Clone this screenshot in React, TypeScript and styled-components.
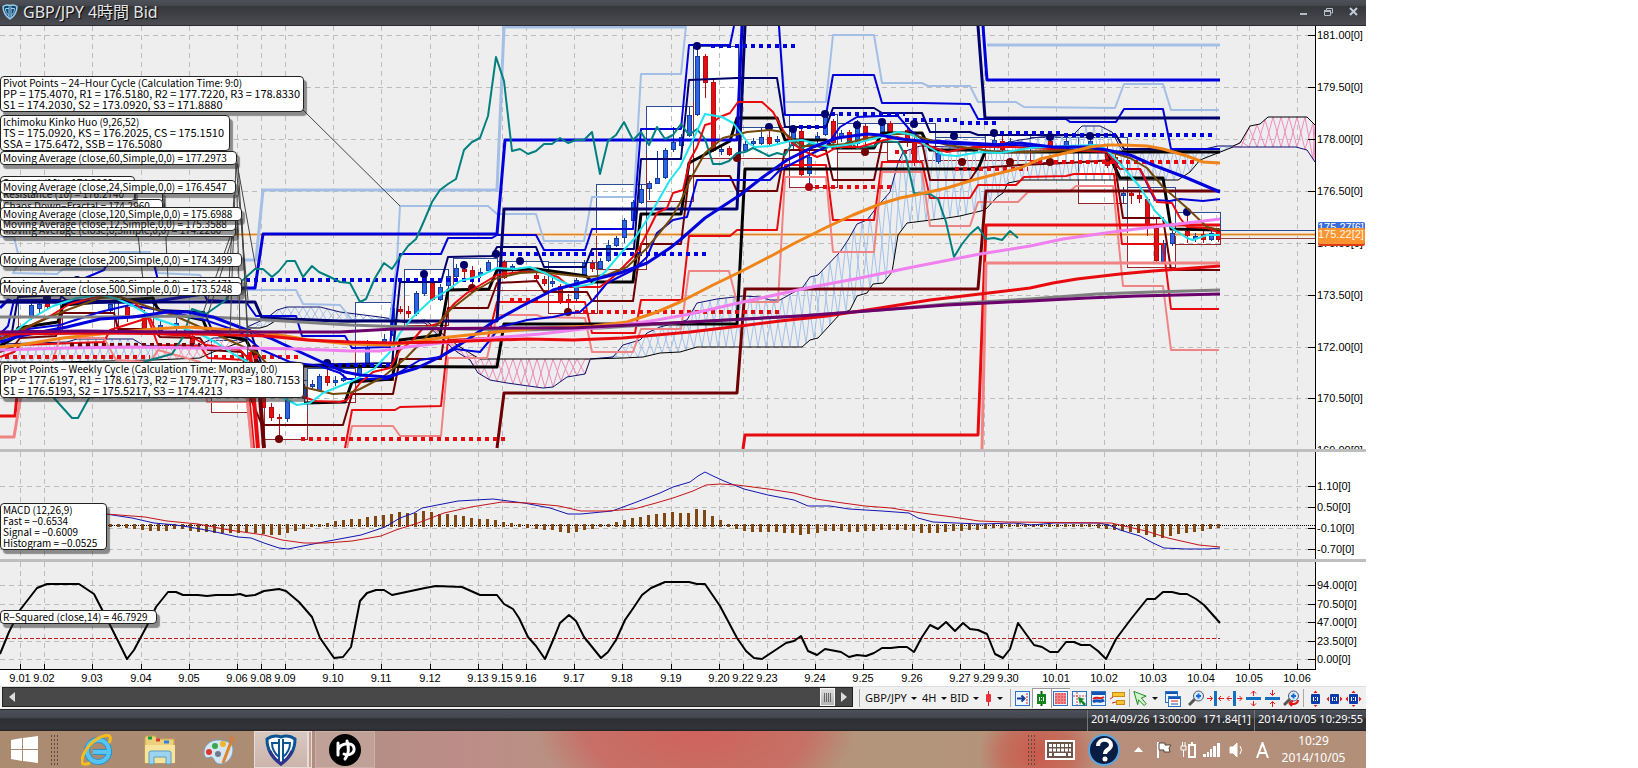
import React from 'react';
import styled, { createGlobalStyle } from 'styled-components';

const UI = `"Noto Sans", "Noto Sans CJK JP", sans-serif`;
const AXIS = `"Liberation Sans", Arial, sans-serif`;
const LABEL = `"Noto Sans CJK JP", "Noto Sans", sans-serif`;

const GlobalStyle = createGlobalStyle`
  body { margin: 0; background: #fff; }
  * { box-sizing: border-box; }
`;

/* ---------- window frame ---------- */

const Desktop = styled.main`
  width: 100%;
  max-width: 1366px;
  font-family: ${UI};
`;

const TitleBar = styled.header`
  display: flex;
  align-items: center;
  height: 26px;
  padding: 0 0 3px 2px;
  background: linear-gradient(#4e5058, #464950 20%, #36373b 26%, #4a4c52 94%, #1c1c20);
  color: #e4e6ea;
`;

const Title = styled.h1`
  flex: 1;
  margin: 0 0 0 5px;
  font-size: 16px;
  line-height: 22px;
  font-weight: 400;
  text-shadow: 1px 1px 1px #000;
`;

const WindowButton = styled.button`
  width: 25px;
  height: 22px;
  padding: 0;
  border: 0;
  background: none;
`;

/* ---------- chart panes ---------- */

const Pane = styled.section`
  position: relative;
  display: grid;
  grid-template-columns: minmax(0, 1fr) 51px;
  background: #eee;
  & + & { border-top: 3px solid #bebebe; }
`;

const Plot = styled.svg`
  display: block;
  width: 100%;
`;

const PriceAxis = styled.svg`
  display: block;
  width: 51px;
  border-left: 1px solid #000;
  background: #fff;
  font: 11px ${AXIS};
`;

const DateAxis = styled.div`
  padding-right: 51px;
  background: #fff;
  font: 11px ${AXIS};
`;

const Callout = styled.div<{ $top: number; $width: number; $small?: boolean }>`
  position: absolute;
  left: 0;
  top: ${p => p.$top}px;
  width: ${p => p.$width}px;
  padding: 0 2px 1px;
  border: 1px solid #222;
  border-radius: 4px;
  background: #fff;
  box-shadow: 3px 4px 1px rgba(40, 40, 40, 0.5);
  color: #000;
  font: ${p => (p.$small ? 10 : 11)}px/11px ${LABEL};
  white-space: pre;
`;

const CalloutTitle = styled.div`
  font-size: 10px;
`;

/* ---------- control row ---------- */

const ControlRow = styled.div`
  display: flex;
  align-items: stretch;
  height: 23px;
  padding-left: 2px;
  background: #f0f0f0;
  border-top: 1px solid #ddd;
`;

const ScrollArea = styled.div`
  flex: 1;
  display: flex;
  min-width: 0;
  margin: 0 0 2px;
  border: 1px solid #222;
  background: #484848;
`;

const ArrowButton = styled.button`
  width: 17px;
  padding: 0;
  border: 0;
  background: none;
  line-height: 0;
`;

const TimeSlider = styled.input`
  flex: 1;
  min-width: 0;
  margin: 0;
  appearance: none;
  background: #484848;
  &::-webkit-slider-thumb {
    appearance: none;
    width: 15px;
    height: 18px;
    border: 1px solid #f4f4f4;
    background:
      linear-gradient(90deg, transparent 3px, #666 3px, #666 4px, transparent 4px, transparent 5px, #666 5px, #666 6px,
        transparent 6px, transparent 7px, #666 7px, #666 8px, transparent 8px, transparent 9px, #666 9px, #666 10px, transparent 10px)
        center / 13px 9px no-repeat,
      linear-gradient(#ddd, #b4b4b4);
  }
`;

const Tools = styled.div`
  display: flex;
  align-items: center;
  padding: 0 3px 0 4px;
`;

const Divider = styled.span`
  width: 1px;
  height: 18px;
  margin: 0 2px;
  background: #aaa;
`;

const PickLabel = styled.label<{ $width: number }>`
  display: flex;
  align-items: center;
  width: ${p => p.$width}px;
  padding-left: 3px;
`;

const Pick = styled.select`
  appearance: none;
  padding: 0;
  border: 0;
  background: none;
  color: #111;
  font: 11px/18px ${UI};
`;

const Caret = styled.span`
  margin-left: 4px;
  border: 3px solid transparent;
  border-top-color: #111;
  border-bottom: 0;
`;

const ToolButton = styled.button<{ $width?: number; $on?: boolean }>`
  display: flex;
  align-items: center;
  justify-content: center;
  width: ${p => p.$width ?? 19}px;
  height: 20px;
  padding: 0;
  border: 0;
  background: ${p => (p.$on ? '#fff' : 'none')};
  box-shadow: ${p => (p.$on ? 'inset 1px 1px #999' : 'none')};
`;

const StatusBar = styled.footer`
  display: flex;
  justify-content: flex-end;
  height: 22px;
  border-top: 1px solid #222;
  background: linear-gradient(#4c5059, #43464e 36%, #2e2f33 42%, #323338 90%, #222);
  color: #fff;
  font-size: 11px;
  line-height: 18px;
`;

const StatusCell = styled.div`
  display: flex;
  gap: 7px;
  padding: 0 3px;
  border-left: 1px solid #777;
`;

/* ---------- taskbar ---------- */

const Taskbar = styled.nav`
  display: flex;
  align-items: center;
  height: 37px;
  background:
    radial-gradient(ellipse 60px 50px at 76% 60%, rgba(204, 84, 70, 0.9), rgba(204, 90, 76, 0.6) 60%, transparent),
    radial-gradient(ellipse 160px 90px at 51% -10%, rgba(210, 92, 88, 0.9), rgba(206, 98, 92, 0.7) 70%, transparent),
    linear-gradient(90deg, #aa8b70, #ad8c74 18%, #b58f85 27%, #bd8d88 34%, #b3957b 50%, #b3957b 70%, #b78f7c 82%, #b18f78);
`;

const TaskButton = styled.button<{ $width: number; $active?: boolean; $open?: boolean }>`
  display: flex;
  align-items: center;
  justify-content: center;
  width: ${p => p.$width}px;
  height: 37px;
  padding: 0;
  border: ${p => (p.$active || p.$open ? `1px solid ${p.$active ? '#e8dcd6' : '#cbb0a6'}` : '0')};
  background: ${p => (p.$active ? 'linear-gradient(#d8c8c0, #cbb4ac)' : p.$open ? '#bfa197' : 'none')};
`;

const StackEdge = styled.span`
  width: 4px;
  height: 37px;
  margin-right: 3px;
  border: 1px solid #e8dcd6;
  background: #bfa196;
`;

const Grip = styled.span`
  width: 9px;
  height: 32px;
  background: radial-gradient(circle, #5d4a3e 1px, transparent 1px) 0 0 / 3px 4px;
`;

const Tray = styled.div`
  display: flex;
  align-items: center;
  margin-left: auto;
`;

const Clock = styled.time`
  width: 90px;
  padding: 0 15px 2px 0;
  color: #fff;
  font-size: 12px;
  line-height: 17px;
  text-align: center;
`;

/* ---------- data ---------- */

const DAYS: [number, string][] = [
  [20, '9.01'], [44, '9.02'], [92, '9.03'], [141, '9.04'], [189, '9.05'], [237, '9.06'], [261, '9.08'], [285, '9.09'],
  [333, '9.10'], [381, '9.11'], [430, '9.12'], [478, '9.13'], [502, '9.15'], [526, '9.16'], [574, '9.17'], [622, '9.18'],
  [671, '9.19'], [719, '9.20'], [743, '9.22'], [767, '9.23'], [815, '9.24'], [863, '9.25'], [912, '9.26'], [960, '9.27'],
  [984, '9.29'], [1008, '9.30'], [1056, '10.01'], [1104, '10.02'], [1153, '10.03'], [1201, '10.04'], [1216, ''],
  [1249, '10.05'], [1297, '10.06'],
];

const PRICES: [number, string][] = [
  [35, '181.00[0]'], [87, '179.50[0]'], [139, '178.00[0]'], [191, '176.50[0]'], [243, '175.00[0]'],
  [295, '173.50[0]'], [347, '172.00[0]'], [398, '170.50[0]'], [450, '169.00[0]'],
];
const MACD_LEVELS: [number, string][] = [[486, '1.10[0]'], [507, '0.50[0]'], [528, '-0.10[0]'], [549, '-0.70[0]']];
const RSQ_LEVELS: [number, string][] = [[585, '94.00[0]'], [604, '70.50[0]'], [622, '47.00[0]'], [641, '23.50[0]'], [659, '0.00[0]']];

const C = {
  pale: '#a3bfe6', blue: '#0000dc', navy: '#00006c', black: '#000', maroon: '#6e0004', red: '#e80a0e', salmon: '#f08484',
};

type Line = [color: string, width: number, points: string];

const DAILY_PIVOTS: Line[] = [
  [C.pale, 2, '0,237 14,237 20,262 13,273 57,274 63,269 103,269 110,252 150,252 158,273 200,275 208,290 296,290 303,304 340,305 352,320 390,320 397,260 400,206 488,206 497,214 536,214 544,241 584,241 592,197 634,197 641,74 681,74 686,26'],
  [C.pale, 2, '779,26 785,102 826,102 833,35 874,35 882,83 922,83 928,86 970,86 978,102 1016,102 1024,107 1115,108 1124,84 1163,84 1171,110 1219,110'],
  [C.blue, 2, '0,334 8,326 14,300 60,300 66,286 104,270 111,257 152,257 158,280 200,284 207,300 246,302 256,316 296,316 302,336 345,336 352,348 390,347 396,281 400,254 441,254 448,238 492,238 497,235 536,235 544,250 585,250 592,229 633,229 641,129 681,129 689,45 730,45 734,26'],
  [C.blue, 2, '779,26 785,115 826,115 833,75 874,75 882,103 922,103 970,104 978,119 1066,119 1070,122 1116,122 1124,109 1163,109 1171,149 1220,149'],
  [C.navy, 2, '0,340 12,332 18,297 60,295 66,300 152,302 160,310 204,312 212,330 250,330 262,366 345,364 392,363 400,282 441,282 448,257 492,256 497,247 536,247 544,267 585,267 592,249 634,249 641,159 681,159 689,80 737,78 777,78 785,127 826,127 833,108 874,108 882,113 922,113 930,132 970,132 978,135 1116,135 1124,149 1163,149 1171,152 1220,152'],
  [C.black, 3, '0,346 14,338 18,328 58,322 63,305 153,298 158,310 203,320 208,332 246,340 260,366'],
  [C.black, 3, '304,403 345,402 352,382 392,379 400,340 440,335 448,290 489,289 497,270 537,269 586,276 592,282 633,282 641,214 681,214 689,163 730,141 737,118 777,118 785,140 826,140 833,148 874,148 882,133 922,133 930,150 978,150'],
  [C.black, 3, '1107,151 1120,178 1163,178 1171,229 1220,230'],
  [C.maroon, 2, '0,352 14,346 20,338 56,336 62,313 114,313 118,329 153,329 160,337 200,338 208,350 242,352 250,397 262,425 343,425 352,394 393,394 400,359 441,359 448,308 488,308 497,283 537,281 544,292 587,292 592,301 633,301 641,244 681,244 689,176 730,176 737,191 777,191 785,150 826,150 833,180 874,180 882,142 922,142 930,180 970,180 978,168 1020,165 1066,163 1114,160 1123,218 1163,218 1171,270 1220,270'],
  [C.red, 2, '0,357 14,352 20,345 104,342 110,330 148,318 158,345 200,346 208,358 246,360 254,448'],
  [C.red, 2, '345,448 352,410 395,410 400,407 441,406 448,340 488,338 497,302 585,302 592,333 635,333 641,300 682,300 689,236 730,236 737,230 777,230 785,165 826,165 833,220 874,220 882,162 922,162 930,198 970,198 978,185 1016,185 1024,177 1066,176 1074,174 1114,174 1122,244 1163,244 1171,309 1219,309'],
  [C.salmon, 2, '52,362 60,338 104,338 116,360 150,362 158,350 200,362 207,402 247,402 252,448'],
  [C.salmon, 2, '347,448 352,426 393,426 400,436 441,436 448,358 487,358 497,315 537,315 542,317 585,318 592,352 633,352 641,329 681,329 689,271 729,271 737,302 778,302 785,177 826,177 833,252 874,252 882,172 922,172 930,226 970,226 978,202 1018,202 1028,192 1070,191 1076,186 1113,186 1123,286 1163,286 1171,350 1219,350'],
];

const WEEKLY_PIVOTS: Line[] = [
  [C.pale, 3, '242,260 256,260 263,190 497,190 504,27 685,27'],
  [C.pale, 3, '987,45 1220,45'],
  [C.blue, 3, '0,308 8,300 14,302 150,302 244,288 255,288 263,234 497,234 505,140 737,140 742,26'],
  [C.blue, 3, '983,26 987,80 1220,80'],
  [C.navy, 3, '0,302 255,302 262,318 340,321 497,321 504,209 737,209 745,26'],
  [C.navy, 3, '978,26 985,118 1220,118'],
  [C.black, 3, '262,366 497,367 504,324 737,324 745,169 978,169 985,152 1220,152'],
  [C.maroon, 3, '497,448 504,393 737,393 745,289 978,289 986,191 1220,191'],
  [C.maroon, 4, '254,345 260,397 264,448'],
  [C.red, 3, '0,416 15,416 20,363'],
  [C.red, 4, '250,352 258,448'],
  [C.salmon, 3, '0,437 14,437 21,395'],
  [C.salmon, 3, '247,395 252,448'],
  [C.red, 3, '743,449 745,435 978,435 986,225 1220,225'],
  [C.salmon, 3, '982,449 986,263 1220,263'],
];

const LAGGING =
  '53,397 72,418 78,418 89,398 120,372 150,360 172,354 183,337 192,309 206,314 226,300 232,285 243,280 255,269 263,269 272,277 279,271 287,261 295,261 303,277 312,266 319,272 330,277 340,282 350,283 360,302 366,299 375,278 384,263 392,269 400,257 408,246 416,239 424,221 432,202 440,190 448,184 456,179 464,150 472,142 480,138 488,116 496,57 504,81 512,151 520,149 528,154 536,151 544,144 552,144 560,138 568,143 576,140 584,140 592,132 600,174 608,141 616,135 624,122 633,140 641,132 649,145 657,127 665,139 673,135 681,124 689,135 697,129 705,139 713,164 721,164 729,161 737,153 745,152 753,148 761,152 769,156 777,153 785,155 793,142 801,149 809,144 817,146 825,149 833,144 841,148 849,141 857,148 865,147 874,146 882,141 898,142 906,157 914,193 930,194 938,199 946,222 954,257 962,244 970,234 978,227 986,239 994,238 1002,240 1010,231 1018,238';

const AVERAGES: Line[] = [
  ['#008080', 2, LAGGING],
  [C.blue, 2, '0,336 20,330 60,325 100,312 130,305 170,312 205,320 240,332 262,350 290,362 320,366 340,373 347,379 387,379 395,375 420,360 440,357 455,349 480,352 490,340 500,327 527,320 553,317 570,313 580,312 593,300 607,283 633,270 647,257 657,233 673,220 687,217 697,180 770,180 780,170 813,153 826,147 840,127 857,117 880,116 898,116 910,130 923,140 1013,145 1107,152 1120,169 1140,169 1155,200 1170,201 1180,199 1203,201 1220,199'],
  [C.red, 2, '0,338 14,336 30,326 50,316 70,304 100,296 118,296 134,302 150,318 157,334 190,336 206,345 240,350 262,372 300,396 316,401 340,402 347,400 360,383 373,372 390,368 400,350 413,340 423,328 440,323 447,312 455,303 467,293 497,275 520,272 540,272 558,277 570,287 600,287 613,277 633,257 640,247 657,213 667,208 673,193 683,190 690,160 697,147 705,125 712,123 720,117 730,113 738,102 762,102 773,112 783,130 792,143 802,150 817,157 827,153 837,147 860,147 877,142 897,137 923,144 947,152 973,147 1013,147 1107,152 1120,169 1140,169 1157,202 1172,203 1180,218 1187,227 1207,228 1220,233'],
  ['#744808', 2, '0,340 20,330 43,320 67,310 100,298 120,297 143,305 173,315 200,327 233,342 257,353 280,378 303,387 333,394 350,393 360,389 383,377 407,357 430,333 450,310 473,292 497,278 520,273 540,272 567,275 587,277 607,275 627,267 647,248 670,220 680,203 690,180 705,153 723,138 747,132 770,130 783,132 802,146 823,146 845,144 867,138 887,135 907,133 923,138 947,145 970,148 997,152 1030,152 1070,150 1103,150 1130,158 1147,168 1163,187 1187,208 1207,227 1220,230'],
  ['#20e4ee', 2, '0,335 13,333 32,318 53,306 77,298 100,295 115,298 133,306 157,319 180,327 200,334 217,343 233,354 248,362 265,380 282,397 297,405 310,403 323,393 350,382 360,377 375,368 390,352 400,333 412,318 430,301 448,290 460,281 480,276 497,268 515,269 530,267 545,273 560,281 575,287 592,284 605,272 620,254 635,238 650,215 670,180 680,167 689,148 705,114 722,117 733,123 740,132 748,143 755,147 770,146 790,141 802,140 817,144 830,147 853,144 880,137 898,132 913,135 925,145 943,155 957,156 980,152 1000,153 1030,148 1067,146 1097,145 1107,150 1123,167 1140,187 1155,211 1172,228 1187,238 1193,240 1207,235 1220,235'],
  ['#808080', 3, '0,317 100,317 187,316 250,319 350,325 407,327 457,329 523,330 600,328 690,322 800,316 880,310 947,304 1030,299 1097,294 1153,292 1220,290'],
  [C.blue, 3, '0,342 20,336 67,327 100,319 133,317 167,312 187,312 213,317 247,330 270,338 300,352 333,367 345,372 360,375 387,377 417,368 440,357 467,340 493,322 520,307 553,290 580,283 620,273 647,263 670,248 680,240 705,218 740,195 763,177 787,160 813,147 837,138 867,134 880,135 900,139 930,142 963,144 997,145 1020,143 1053,147 1087,147 1107,150 1130,155 1153,165 1187,178 1220,192'],
  ['#f08418', 3, '0,347 20,345 63,338 100,334 153,329 187,327 233,330 267,333 310,340 350,344 390,345 413,342 440,338 497,332 540,328 593,326 627,322 657,312 680,302 713,285 740,272 773,255 793,244 827,227 853,215 880,204 900,198 920,194 947,188 973,180 1020,168 1040,159 1070,152 1090,147 1107,145 1123,145 1147,146 1163,149 1187,156 1203,162 1220,163'],
  ['#f080f0', 3, '0,350 67,348 133,347 200,348 240,348 300,349 350,351 380,351 407,347 440,343 493,338 540,334 583,329 623,325 657,320 690,314 743,302 807,288 860,278 913,267 980,254 1030,246 1063,239 1120,231 1170,225 1220,219'],
  [C.red, 3, '0,334 100,333 200,334 267,336 307,340 350,342 393,343 440,342 527,339 573,340 623,338 690,332 740,326 780,321 827,316 880,308 930,300 980,294 1030,288 1053,283 1077,279 1120,274 1153,271 1180,269 1220,266'],
  ['#6c006c', 3, '0,332 83,331 167,332 340,332 393,329 523,328 573,328 690,322 800,316 880,310 947,305 1030,301 1087,298 1137,296 1220,294'],
];

type Cloud = { tint: string; upper: string; lower: string };
const CLOUDS: Cloud[] = [
  { tint: '#a6c2ea', upper: '0,344 67,342 77,339 133,339 143,345 153,346', lower: '0,362 50,362 110,361 153,360' },
  { tint: '#ec9cc4', upper: '153,346 200,345 213,338 247,337', lower: '153,360 200,358 213,352 247,340' },
  { tint: '#a6c2ea', upper: '247,327 267,318 277,310 287,307 320,307 340,312 380,317 393,319', lower: '247,328 260,328 267,326 277,320 300,320 350,322 393,320' },
  { tint: '#ec8cbc', upper: '393,319 407,322 425,320 440,332 457,345 473,355 480,359 590,359', lower: '393,320 407,323 425,323 440,337 457,352 470,360 478,373 490,380 507,383 543,388 553,387 567,377 585,374 590,360' },
  { tint: '#a3c2ea', upper: '590,359 613,357 623,345 640,340 647,333 660,327 687,320 697,303 717,299 743,296 760,297 770,300 780,300 803,287 810,277 818,275 840,252 848,240 857,224 867,220 877,207 890,192 898,163 903,152 920,146 980,148 1020,140 1040,137 1073,135 1082,126 1100,126 1112,132 1120,147 1123,151 1200,150 1218,146 1233,146', lower: '590,359 623,358 643,357 660,353 680,352 697,347 802,347 810,340 818,338 840,314 850,310 857,296 867,293 873,284 883,283 892,272 898,235 907,223 947,218 960,216 985,210 997,197 1003,193 1008,183 1023,180 1178,180 1190,172 1200,160 1233,147' },
  { tint: '#f08cc0', upper: '1233,146 1240,143 1250,126 1260,124 1268,117 1307,117 1315,125', lower: '1233,147 1296,147 1307,150 1315,162' },
];

const RANGE_BOXES: [number, number, number, number][] = [
  [18, 302, 60, 330], [62, 300, 114, 330], [118, 300, 153, 328], [211, 340, 247, 412], [264, 380, 307, 439], [307, 368, 355, 402],
  [355, 302, 393, 380], [404, 269, 448, 325], [453, 258, 497, 290], [497, 261, 548, 290], [548, 262, 597, 313],
  [596, 184, 646, 269], [646, 106, 693, 201], [693, 46, 738, 158], [738, 127, 789, 158], [789, 114, 837, 187],
  [837, 123, 887, 152], [887, 123, 935, 160], [935, 137, 985, 160], [985, 134, 1030, 160], [1030, 137, 1078, 162], [1078, 137, 1127, 203],
  [1127, 187, 1175, 267], [1175, 212, 1220, 244],
];

/* x, body top, body bottom, high, low, rising */
const CANDLES: [number, number, number, number, number, 0 | 1][] = [
  [31, 305, 317, 300, 320, 1], [39, 304, 308, 300, 314, 1], [47, 303, 306, 300, 310, 0], [110, 304, 310, 300, 314, 1],
  [127, 307, 315, 302, 322, 0], [144, 317, 330, 310, 334, 0], [160, 325, 330, 320, 334, 1], [176, 323, 327, 318, 332, 1],
  [192, 336, 343, 330, 348, 0], [263, 398, 407, 394, 408, 0], [271, 407, 417, 403, 421, 0], [279, 417, 418, 414, 437, 0],
  [287, 400, 418, 396, 422, 1], [304, 388, 398, 384, 402, 1], [312, 384, 386, 380, 390, 1], [319, 376, 390, 374, 392, 1],
  [327, 376, 382, 365, 386, 0], [335, 380, 382, 376, 386, 1], [343, 378, 380, 374, 382, 1], [359, 368, 375, 364, 378, 1],
  [367, 347, 364, 340, 366, 1], [384, 339, 341, 334, 344, 1], [392, 308, 334, 304, 336, 1], [400, 309, 311, 306, 314, 0],
  [408, 311, 313, 306, 318, 0], [416, 293, 313, 291, 316, 1], [424, 277, 293, 275, 296, 1], [432, 283, 299, 281, 301, 0],
  [440, 287, 299, 284, 301, 1], [448, 276, 285, 270, 288, 1], [456, 268, 276, 264, 280, 1], [464, 269, 271, 264, 278, 0],
  [472, 270, 277, 266, 288, 0], [480, 272, 275, 268, 278, 1], [488, 262, 270, 260, 273, 1], [504, 262, 277, 260, 279, 0],
  [512, 266, 268, 264, 272, 1], [536, 275, 278, 272, 281, 0], [544, 279, 283, 276, 286, 0], [552, 281, 283, 276, 287, 1],
  [560, 286, 302, 284, 304, 0], [568, 299, 301, 294, 310, 0], [576, 280, 298, 278, 301, 1], [584, 263, 275, 260, 278, 1],
  [592, 263, 268, 260, 272, 0], [600, 261, 268, 258, 270, 1], [608, 245, 260, 240, 262, 1], [616, 238, 245, 236, 247, 1],
  [624, 220, 237, 218, 243, 1], [633, 202, 220, 200, 222, 1], [641, 189, 202, 184, 204, 1], [649, 183, 188, 181, 200, 1],
  [657, 178, 183, 151, 184, 1], [665, 150, 177, 148, 179, 1], [673, 142, 149, 127, 152, 1], [681, 137, 145, 134, 147, 1],
  [689, 115, 135, 107, 137, 1], [697, 56, 114, 46, 116, 1], [705, 56, 82, 54, 98, 0], [713, 82, 150, 80, 152, 0],
  [721, 149, 151, 145, 155, 1], [729, 148, 154, 146, 156, 0], [745, 144, 150, 141, 152, 1], [753, 141, 143, 138, 146, 1],
  [761, 137, 143, 128, 145, 1], [769, 137, 143, 130, 145, 0], [777, 139, 141, 136, 145, 1], [793, 128, 145, 126, 150, 1],
  [801, 131, 174, 129, 176, 0], [809, 157, 173, 150, 186, 1], [817, 136, 139, 132, 144, 1], [825, 117, 134, 114, 136, 1],
  [833, 121, 142, 119, 144, 0], [841, 133, 136, 130, 142, 1], [849, 132, 145, 130, 148, 0], [857, 125, 143, 120, 146, 1],
  [865, 126, 140, 124, 148, 0], [882, 122, 132, 119, 136, 1], [890, 123, 132, 121, 136, 0], [907, 130, 140, 126, 147, 0],
  [914, 140, 162, 136, 166, 0], [938, 153, 161, 149, 164, 1], [994, 140, 146, 134, 150, 1], [1002, 141, 149, 132, 154, 0],
  [1010, 141, 145, 138, 148, 1], [1050, 141, 146, 138, 152, 0], [1066, 141, 148, 137, 150, 1], [1090, 141, 148, 136, 151, 1],
  [1107, 152, 165, 146, 168, 0], [1115, 157, 167, 152, 170, 0], [1123, 193, 195, 187, 203, 1], [1131, 193, 195, 190, 204, 0],
  [1139, 195, 198, 190, 203, 0], [1147, 199, 224, 197, 236, 0], [1156, 228, 260, 218, 262, 0], [1163, 243, 261, 240, 263, 1],
  [1172, 233, 243, 231, 246, 1], [1187, 231, 235, 214, 243, 0], [1195, 236, 238, 233, 242, 1], [1203, 234, 239, 231, 243, 0],
  [1211, 233, 239, 230, 241, 1], [1218, 231, 239, 228, 242, 0],
];

const FRACTALS: [number, number, string][] = [
  [77, 280, C.navy], [47, 298, C.navy], [327, 363, C.navy], [424, 274, C.navy], [464, 265, C.navy], [496, 254, C.navy],
  [520, 261, C.navy], [697, 46, C.navy], [769, 127, C.navy], [793, 129, C.navy], [825, 114, C.navy], [857, 125, C.navy],
  [882, 122, C.navy], [914, 124, C.navy], [954, 136, C.navy], [994, 133, C.navy], [1050, 137, C.navy], [1090, 136, C.navy],
  [1187, 212, C.navy], [279, 439, C.maroon], [472, 288, C.maroon], [568, 312, C.maroon], [737, 158, C.maroon],
  [809, 187, '#b00010'], [865, 152, C.maroon], [962, 162, C.maroon], [1010, 162, C.maroon], [1050, 162, C.maroon],
];

/* y, from, to, colour */
const LEVELS: [number, number, number, string][] = [
  [280, 246, 480, C.blue], [280, 100, 170, C.blue], [254, 502, 708, C.blue], [46, 711, 796, C.blue], [127, 799, 826, C.blue], [114, 831, 905, C.blue],
  [120, 905, 958, C.blue], [123, 960, 998, C.blue], [133, 1000, 1062, C.blue], [135, 1064, 1214, C.blue], [365, 330, 390, C.blue],
  [357, 5, 150, C.red], [357, 214, 300, C.red], [345, 70, 200, C.maroon], [439, 301, 506, C.red], [300, 510, 540, C.red], [312, 575, 780, C.red], [187, 815, 893, C.red],
  [152, 895, 918, C.red], [169, 955, 1028, C.red], [162, 1030, 1196, C.red],
];

const CONNECTORS =
  'M303 110 400 206M138 235 143 280M164 199 168 280M230 237 203 313M233 236 206 320M236 163 230 335M236 164 248 300M237 195 240 334M237 163 256 269M238 164 248 335M234 195 228 300M242 218 248 350';

const MACD_FAST =
  '106,514 132,518 154,523 176,525 189,527 211,531 238,537 251,538 264,543 279,548 288,549 308,545 334,540 361,535 385,527 400,518 414,513 422,508 458,501 493,499 524,503 550,508 568,514 581,514 612,511 634,503 660,493 673,487 690,482 698,476 705,472 713,476 724,481 744,489 768,495 794,500 808,506 830,506 849,509 882,511 909,513 918,518 933,522 979,524 1014,523 1032,525 1054,523 1098,523 1109,525 1120,530 1140,536 1153,543 1164,548 1186,549 1208,549 1220,548';
const MACD_SIGNAL =
  '106,514 119,515 145,517 167,521 198,524 229,530 264,535 282,540 304,543 326,543 352,541 381,536 396,530 418,523 444,513 471,507 502,502 528,503 559,506 581,511 607,511 634,509 656,503 673,498 693,491 706,485 720,484 737,485 768,489 794,493 816,499 843,503 865,506 891,508 922,513 953,517 979,521 1006,522 1111,523 1146,531 1168,538 1199,545 1220,547';
const HISTOGRAM = [
  1, -1, -2, -3, -4, -5, -5, -5, -3, -3, -5, -6, -6, -7, -7, -7, -7, -6, -7, -8, -9, -9, -7, -5, -3, -1, 1, 2, 4, 5, 6, 6, 8, 9,
  10, 11, 13, 12, 12, 14, 13, 11, 11, 10, 9, 7, 6, 6, 5, 3, 2, 1, -2, -3, -4, -4, -6, -7, -6, -4, -3, -1, 1, 3, 5, 7, 8, 10, 11,
  12, 13, 12, 12, 16, 15, 9, 5, 1, -3, -5, -6, -6, -6, -6, -7, -7, -9, -8, -7, -5, -5, -5, -6, -6, -5, -5, -4, -4, -4, -4, -5, -7,
  -7, -7, -6, -5, -5, -4, -4, -3, -2, -2, -1, -1, -1, -1, -1, -1, -1, -1, -1, -1, -1, -2, -3, -4, -5, -6, -7, -9, -11, -12, -10,
  -8, -7, -6, -5, -3, -2,
];
const RSQ =
  '0,654 9,632 20,610 37,588 47,584 79,584 94,594 110,625 127,659 134,650 150,620 156,607 168,592 176,592 183,595 198,595 207,596 216,595 233,595 240,594 246,596 255,595 264,591 279,589 286,591 299,602 312,617 320,638 334,658 343,657 351,647 360,601 367,593 376,590 384,590 392,595 425,588 436,586 462,587 480,595 497,595 504,604 513,609 519,618 528,637 536,646 545,659 554,638 560,623 569,615 576,621 584,637 601,658 608,652 616,640 625,620 634,607 642,595 651,588 665,582 689,582 697,584 705,584 720,606 737,638 746,651 754,658 762,659 777,649 786,643 794,641 801,636 808,651 817,655 825,649 841,652 849,657 857,655 866,656 874,653 882,648 891,648 899,647 907,647 914,652 922,637 930,625 938,629 946,622 955,631 963,623 970,629 978,630 987,634 995,654 1003,658 1010,649 1018,623 1034,645 1042,647 1050,652 1058,652 1066,642 1074,642 1081,645 1090,645 1098,651 1106,659 1116,639 1131,619 1147,599 1155,599 1163,592 1172,592 1180,594 1187,594 1196,599 1204,605 1212,614 1220,623';

/* ---------- chart helpers ---------- */

const parse = (s: string) => s.split(' ').map(p => p.split(',').map(Number));

function valueAt(points: number[][], x: number) {
  for (let i = 1; i < points.length; i++) {
    const [x0, y0] = points[i - 1];
    const [x1, y1] = points[i];
    if (x <= x1) return y0 + ((y1 - y0) * Math.max(0, x - x0)) / (x1 - x0 || 1);
  }
  return points[points.length - 1][1];
}

function hatch({ upper, lower }: Cloud) {
  const up = parse(upper);
  const low = parse(lower);
  const end = up[up.length - 1][0];
  let d = '';
  for (let x = up[0][0]; x < end; x += 8) {
    const n = Math.min(x + 8, end);
    d += `M${x} ${valueAt(up, x)}L${n} ${valueAt(low, n)}M${x} ${valueAt(low, x)}L${n} ${valueAt(up, n)}`;
  }
  return d;
}

const Lines = ({ data }: { data: Line[] }) => (
  <>
    {data.map(([color, width, points], i) => (
      <polyline key={i} points={points} fill="none" stroke={color} strokeWidth={width} strokeLinejoin="round" />
    ))}
  </>
);

const Grid = ({ top, bottom, rows }: { top: number; bottom: number; rows: [number, string][] }) => (
  <g stroke="#bcbcbc" strokeDasharray="5 4" shapeRendering="crispEdges">
    {DAYS.map(([x]) => <line key={x} x1={x + 0.5} x2={x + 0.5} y1={top} y2={bottom} />)}
    {rows.map(([y]) => <line key={y} x1="0" x2="1315" y1={y + 0.5} y2={y + 0.5} />)}
  </g>
);

const Ticks = ({ rows }: { rows: [number, string][] }) => (
  <g stroke="#000" shapeRendering="crispEdges">
    {rows.map(([y]) => <line key={y} x1="1308" x2="1315" y1={y + 0.5} y2={y + 0.5} />)}
  </g>
);

const Scale = ({ top, height, rows, children }: { top: number; height: number; rows: [number, string][]; children?: React.ReactNode }) => (
  <PriceAxis viewBox={`0 ${top} 50 ${height}`} height={height}>
    {rows.map(([y, label]) => <text key={y} x="1" y={y + 4}>{label}</text>)}
    {children}
  </PriceAxis>
);

function PricePlot() {
  return (
    <Plot viewBox="0 26 1315 423" height="423" preserveAspectRatio="xMaxYMid slice" role="img" aria-label="GBP/JPY price chart">
      {RANGE_BOXES.map(([l, t, r, b]) => <rect key={l} x={l} y={t} width={r - l} height={b - t} fill="#fff" />)}
      <Grid top={26} bottom={449} rows={PRICES} />
      {RANGE_BOXES.map(([l, t, r, b]) => (
        <g key={l} fill="none" strokeWidth="1" shapeRendering="crispEdges">
          <path stroke="#2c4c96" d={`M${l} ${(t + b) / 2}V${t}H${r}V${(t + b) / 2}`} />
          <path stroke="#96282c" d={`M${l} ${(t + b) / 2}V${b}H${r}V${(t + b) / 2}`} />
        </g>
      ))}
      <path d="M0 234.500H1315" stroke="#f7c48a" strokeWidth="3" />
      <path d="M0 234.500H1315" stroke="#d88430" />
      <path d="M1216 230.500H1315" stroke="#2c4c96" />
      <path d="M1216 238.500H1315" stroke="#96463c" />
      {CLOUDS.map((cloud, i) => (
        <g key={i} fill="none">
          <path d={hatch(cloud)} stroke={cloud.tint} />
          <polyline points={cloud.upper} stroke={i === 3 || i === 5 ? '#000' : '#101070'} />
          <polyline points={cloud.lower} stroke={i === 3 || i === 5 ? '#101070' : '#000'} />
        </g>
      ))}
      {CANDLES.map(([x, t, b, hi, lo, up]) => (
        <g key={x} fill={up ? '#2c64e4' : '#e01014'} stroke={up ? '#143c9c' : '#b80c10'} shapeRendering="crispEdges">
          <line x1={x + 0.5} x2={x + 0.5} y1={hi} y2={lo} />
          <rect x={x - 1.5} y={t} width="4" height={b - t} />
        </g>
      ))}
      <Lines data={DAILY_PIVOTS} />
      <Lines data={WEEKLY_PIVOTS} />
      {LEVELS.map(([y, from, to, color], i) => (
        <line key={i} x1={from} x2={to} y1={y} y2={y} stroke={color} strokeWidth="4" strokeDasharray="4 4" />
      ))}
      {FRACTALS.map(([x, y, color], i) => <circle key={i} cx={x} cy={y} r="4" fill={color} />)}
      <Lines data={AVERAGES} />
      <path d={CONNECTORS} fill="none" stroke="#444" />
      <Ticks rows={PRICES} />
    </Plot>
  );
}

function MacdPlot() {
  return (
    <Plot viewBox="0 452 1315 107" height="107" preserveAspectRatio="xMaxYMid slice" role="img" aria-label="MACD">
      <Grid top={452} bottom={559} rows={MACD_LEVELS} />
      <path d="M0 525.500H1315" stroke="#000" strokeDasharray="1 1" shapeRendering="crispEdges" />
      <g fill="#804810">
        {HISTOGRAM.map((v, i) => {
          const x = 109 + i * 8 + Math.round(i / 35);
          return <rect key={i} x={x} y={v > 0 ? 525 - v : 524} width="3" height={Math.abs(v) + 2} />;
        })}
      </g>
      <polyline points={MACD_FAST} fill="none" stroke="#1414b4" />
      <polyline points={MACD_SIGNAL} fill="none" stroke="#c41418" />
      <Ticks rows={MACD_LEVELS} />
    </Plot>
  );
}

function RsqPlot() {
  return (
    <Plot viewBox="0 562 1315 108" height="108" preserveAspectRatio="xMaxYMid slice" role="img" aria-label="R-Squared">
      <Grid top={562} bottom={669} rows={RSQ_LEVELS} />
      <path d="M0 638.500H1220" stroke="#c01818" strokeDasharray="4 2" />
      <polyline points={RSQ} fill="none" stroke="#000" strokeWidth="2" strokeLinejoin="round" />
      <Ticks rows={RSQ_LEVELS} />
      <g stroke="#000" shapeRendering="crispEdges">
        <path d="M0 669.500H1315" />
        {DAYS.map(([x]) => <line key={x} x1={x + 0.5} x2={x + 0.5} y1="664" y2="669" />)}
      </g>
    </Plot>
  );
}

/* ---------- icons ---------- */

const Shield = ({ size, light }: { size: number; light?: boolean }) => {
  const ink = light ? '#9cd0f0' : '#0c5494';
  return (
    <svg width={size} height={size} viewBox="0 0 32 32" fill="none">
      <path d="M16 3C11 1 6 2 2 5c0 12 5 19 14 25 9-6 14-13 14-25-4-3-9-4-14-2Z" fill={light ? '#14486c' : '#fff'} stroke={ink} strokeWidth="3" />
      <path d="M14 5v23M18 5v23" stroke={ink} strokeWidth="2" />
      <path d="M14 9H7c0 6 2 10 7 14M18 9h7c0 6-2 10-7 14" stroke={ink} strokeWidth="2" />
      {!light && <path d="M5 17c2 5 6 9 11 13 5-4 9-8 11-13" stroke="#34308c" strokeWidth="3" />}
    </svg>
  );
};

const Box16 = ({ children }: { children: React.ReactNode }) => (
  <svg width="17" height="17" viewBox="0 0 17 17" fill="none">{children}</svg>
);

const Frame = () => <rect x="1.500" y="1.500" width="14" height="14" fill="#eef6ff" stroke="#2c74c4" />;

const Magnifier = ({ back }: { back?: boolean }) => (
  <Box16>
    <path d="m1 15 6-6" stroke="#555" strokeWidth="3" />
    <circle cx="10.500" cy="6" r="5" fill="#d8ecff" stroke="#556" />
    <path d="M8 6h5M10.500 3.500v5" stroke="#1868e0" strokeWidth="2" />
    {back && <path d="M15 10c0 4-5 5-9 3M6 13l4-2m-4 2 3 3" stroke="#e01818" strokeWidth="2" />}
  </Box16>
);

const BarArrows = ({ inward, flat }: { inward?: boolean; flat?: boolean }) => (
  <Box16>
    <g transform={flat ? 'rotate(90 8.500 8.500)' : undefined}>
      <path d="M8.500 1v15" stroke="#1470c0" strokeWidth="3" />
      <path
        d={inward ? 'M0 8.500h5M3 6l2.500 2.500L3 11M17 8.500h-5M14 6l-2.500 2.500L14 11' : 'M1 8.500h5M3.500 6 1 8.500 3.500 11M16 8.500h-5M13.500 6 16 8.500 13.500 11'}
        stroke="#e01818"
      />
    </g>
  </Box16>
);

const Fit = ({ across, down }: { across?: boolean; down?: boolean }) => (
  <Box16>
    <rect x="4" y="4" width="9" height="10" rx="1" fill="#0c3cac" />
    <path d="M6.500 7v4M10.500 7v4M8.500 7v1M8.500 10v1" stroke="#fff" />
    {down && <path d="m6.500 3 2-2.500 2 2.500ZM6.500 15l2 2 2-2Z" fill="#e01818" />}
    {across && <path d="M3 6.500.500 9 3 11.500ZM14 6.500 16.500 9 14 11.500Z" fill="#e01818" />}
  </Box16>
);

type Note = { top: number; width: number; title?: string; text: string };
const NOTES: Note[] = [
  { top: 50, width: 304, title: 'Pivot Points − 24−Hour Cycle (Calculation Time: 9:0)', text: 'PP = 175.4070, R1 = 176.5180, R2 = 177.7220, R3 = 178.8330\nS1 = 174.2030, S2 = 173.0920, S3 = 171.8880' },
  { top: 89, width: 230, title: 'Ichimoku Kinko Huo (9,26,52)', text: 'TS = 175.0920, KS = 176.2025, CS = 175.1510\nSSA = 175.6472, SSB = 176.5080' },
  { top: 125, width: 237, text: 'Moving Average (close,60,Simple,0,0) = 177.2973' },
  { top: 164, width: 163, text: 'Chaos Up−Fractal = 175.9080' },
  { top: 173, width: 163, text: 'Chaos Down−Fractal = 174.2960' },
  { top: 150, width: 135, text: 'Support (10) = 174.2960' },
  { top: 161, width: 135, text: 'Resistance (10) = 176.2740' },
  { top: 154, width: 236, text: 'Moving Average (close,24,Simple,0,0) = 176.4547' },
  { top: 197, width: 236, text: 'Moving Average (close,6,Simple,0,0) = 174.2260' },
  { top: 191, width: 236, text: 'Moving Average (close,12,Simple,0,0) = 175.3588' },
  { top: 181, width: 242, text: 'Moving Average (close,120,Simple,0,0) = 175.6988' },
  { top: 227, width: 242, text: 'Moving Average (close,200,Simple,0,0) = 174.3499' },
  { top: 251, width: 242, text: 'Moving Average (close,300,Simple,0,0) = 173.6471' },
  { top: 256, width: 242, text: 'Moving Average (close,500,Simple,0,0) = 173.5248' },
  { top: 336, width: 304, title: 'Pivot Points − Weekly Cycle (Calculation Time: Monday, 0:0)', text: 'PP = 177.6197, R1 = 178.6173, R2 = 179.7177, R3 = 180.7153\nS1 = 176.5193, S2 = 175.5217, S3 = 174.4213' },
];

const PICKS: [string, string, number][] = [['Symbol', 'GBP/JPY', 57], ['Period', '4H', 28], ['Side', 'BID', 32]];

function Toolbar() {
  return (
    <Tools role="toolbar">
      <Divider />
      {PICKS.map(([name, value, width]) => (
        <PickLabel key={name} $width={width}>
          <Pick aria-label={name}><option>{value}</option></Pick>
          <Caret />
        </PickLabel>
      ))}
      <ToolButton $width={29} aria-label="Chart type">
        <svg width="9" height="15" viewBox="0 0 9 15"><path d="M4.500 0v15" stroke="#e01818" /><rect x="2" y="3" width="5" height="8" rx="1" fill="#e83038" /></svg>
        <Caret />
      </ToolButton>
      <Divider />
      <ToolButton aria-label="Auto scroll"><Box16><Frame /><path d="M3 8.500h7M7.500 5.500l3 3-3 3" stroke="#143c9c" strokeWidth="2" /><path d="M13 3v12" stroke="#e01818" strokeDasharray="2 1" /></Box16></ToolButton>
      <ToolButton $on aria-label="Data window"><Box16><path d="M8.500 1v15" stroke="#0c5c0c" strokeWidth="2" /><rect x="4" y="4" width="9" height="10" fill="#14841c" /><path d="M6.500 7v4M10.500 7v4M8.500 7v1M8.500 10v1" stroke="#fff" /></Box16></ToolButton>
      <ToolButton $on aria-label="Grid"><Box16><Frame /><rect x="3" y="3" width="11" height="11" fill="#e86068" /><path d="M3 5.500h11M3 8.500h11M3 11.500h11M5.500 3v11M8.500 3v11M11.500 3v11" stroke="#f08c8c" /></Box16></ToolButton>
      <ToolButton aria-label="Crosshair"><Box16><Frame /><path d="M6 2v13M2 6h13" stroke="#e04040" strokeDasharray="2 1" /><path d="m7 7 7 2-3 1 4 4-2 2-3-4-1 3Z" fill="#14841c" /></Box16></ToolButton>
      <ToolButton aria-label="Indicators"><Box16><Frame /><path d="M2 3.500h13" stroke="#1454b4" strokeWidth="3" /><path d="M3 9c4-3 7 1 11-2" stroke="#e01818" strokeWidth="2" /><path d="M3 12c4-3 7 1 11-2" stroke="#1454b4" strokeWidth="3" /></Box16></ToolButton>
      <ToolButton aria-label="Labels"><Box16><rect x="3.500" y="2.500" width="12" height="4" fill="#f8c434" stroke="#c88c10" /><rect x="7.500" y="10.500" width="8" height="4" fill="#f8c434" stroke="#c88c10" /><path d="M4 7 1 9m6 3-4 1" stroke="#c82020" /></Box16></ToolButton>
      <Divider />
      <ToolButton $width={26} aria-label="Cursor"><Box16><path d="m2 1 13 5-5 2 5 6-2 2-6-6-1 5Z" fill="#d4f4cc" stroke="#14841c" strokeWidth="1" /></Box16><Caret /></ToolButton>
      <ToolButton $width={29} aria-label="Windows"><Box16><rect x="1.500" y="1.500" width="12" height="11" fill="#eef6ff" stroke="#2c74c4" /><path d="M2 3h11" stroke="#1454b4" strokeWidth="2" /><rect x="4.500" y="6.500" width="12" height="10" fill="#fff" stroke="#2c74c4" /><path d="M5 8h11" stroke="#1454b4" strokeWidth="2" /><path d="M7 11h7" stroke="#e01818" /><path d="M7 14h7" stroke="#1454b4" /></Box16></ToolButton>
      <ToolButton aria-label="Zoom in"><Magnifier /></ToolButton>
      <ToolButton aria-label="Narrow bars"><BarArrows inward /></ToolButton>
      <ToolButton aria-label="Widen bars"><BarArrows /></ToolButton>
      <ToolButton aria-label="Stretch prices"><BarArrows flat /></ToolButton>
      <ToolButton aria-label="Compress prices"><BarArrows flat inward /></ToolButton>
      <ToolButton aria-label="Reset zoom"><Magnifier back /></ToolButton>
      <Divider />
      <ToolButton aria-label="Fit height"><Fit down /></ToolButton>
      <ToolButton aria-label="Fit width"><Fit across /></ToolButton>
      <ToolButton aria-label="Fit all"><Fit across down /></ToolButton>
    </Tools>
  );
}

function TaskbarRow() {
  return (
    <Taskbar>
      <TaskButton $width={50} aria-label="Start">
        <svg width="28" height="27" viewBox="0 0 28 27" fill="#fff"><path d="m0 4 11-2v11H0ZM12 2l15-2v13H12ZM0 14h11v11L0 23ZM12 14h15v13l-15-2Z" /></svg>
      </TaskButton>
      <Grip />
      <TaskButton $width={76} aria-label="Internet Explorer">
        <svg width="32" height="32" viewBox="0 0 32 32" fill="none">
          <path d="M28 20c-2 5-6 8-11 8-6 0-11-5-11-11S11 6 17 6s11 4 11 12H12" stroke="#2494cc" strokeWidth="6" />
          <path d="M28 20c-2 5-6 8-11 8-6 0-11-5-11-11S11 6 17 6s11 4 11 12H12" stroke="#58c4f4" strokeWidth="4" />
          <path d="M28 9c3-6 1-9-5-7C13 4 2 17 1 26c-1 5 3 5 8 3" stroke="#f4bc1c" strokeWidth="3" />
        </svg>
      </TaskButton>
      <TaskButton $width={50} aria-label="Explorer">
        <svg width="32" height="30" viewBox="0 0 32 30">
          <path d="M1 3q0-2 2-2h8l2 3h17v24H1Z" fill="#ecd07c" stroke="#c8a44c" />
          <path d="M4 3h4" stroke="#18a038" strokeWidth="3" /><path d="M12 5h4" stroke="#d83c28" strokeWidth="3" /><path d="M20 7h5" stroke="#2c84d8" strokeWidth="3" />
          <path d="M1 10h30v18H1Z" fill="#f6e49c" />
          <path d="M5 29V18q0-2 2-2h18q2 0 2 2v11h-5v-7H10v7Z" fill="#9cd4f0" stroke="#5c9cc4" />
        </svg>
      </TaskButton>
      <TaskButton $width={69} aria-label="Paint">
        <svg width="34" height="32" viewBox="0 0 34 32">
          <path d="M17 6C6 5 0 13 1 20c1 5 4 4 7 3 3 0 3 6 8 7 8 1 14-7 14-14S25 7 17 6Z" fill="#d4e6f4" stroke="#7c9cb8" />
          <circle cx="6" cy="18" r="3" fill="#e0342c" /><circle cx="12" cy="12" r="3" fill="#38a848" /><circle cx="20" cy="10" r="3" fill="#f4b428" /><circle cx="15" cy="20" r="3" fill="#6c7c8c" />
          <path d="M20 29 28 8" stroke="#e08428" strokeWidth="3" /><path d="m26 9 1-8 6 3-4 6Z" fill="#c8804c" />
        </svg>
      </TaskButton>
      <TaskButton $width={54} $active aria-label="Trading station"><Shield size={32} /></TaskButton>
      <StackEdge />
      <TaskButton $width={60} $open aria-label="Input method">
        <svg width="32" height="32" viewBox="0 0 32 32" fill="none">
          <circle cx="16" cy="16" r="16" fill="#000" />
          <path d="M9 9v12M9 16c3-8 15-8 16-2s-6 8-10 6M18 7c2 6 2 13-2 18" stroke="#fff" strokeWidth="3" strokeLinecap="round" />
        </svg>
      </TaskButton>
      <Tray>
        <Grip />
        <TaskButton $width={48} aria-label="Touch keyboard">
          <svg width="30" height="20" viewBox="0 0 30 20" fill="none">
            <rect x="1" y="1" width="28" height="18" stroke="#fff" strokeWidth="2" fill="#6c5448" />
            <path d="M4 5.500h22M4 10h22" stroke="#fff" strokeWidth="3" strokeDasharray="3 1" /><path d="M4 14.500h3M9 14.500h12M23 14.500h3" stroke="#fff" strokeWidth="3" />
          </svg>
        </TaskButton>
        <TaskButton $width={40} aria-label="Help">
          <svg width="32" height="32" viewBox="0 0 32 32" fill="none">
            <circle cx="16" cy="16" r="15" fill="#081c44" stroke="#5ca8e0" strokeWidth="2" />
            <path d="M10 12c0-8 13-8 13-1 0 5-6 4-6 9" stroke="#fff" strokeWidth="4" /><circle cx="17" cy="25" r="2.500" fill="#fff" />
          </svg>
        </TaskButton>
        <TaskButton $width={28} aria-label="Show hidden icons"><svg width="9" height="5" viewBox="0 0 9 5"><path d="m0 5 4.500-5L9 5Z" fill="#fff" /></svg></TaskButton>
        <TaskButton $width={24} aria-label="Action centre"><svg width="16" height="17" viewBox="0 0 16 17" fill="none"><path d="M2 1v16" stroke="#fff" strokeWidth="2" /><path d="M3 2h6v2h6l-2 3 1 4H8V9H3Z" fill="#fff" stroke="#54443c" strokeWidth="1" /></svg></TaskButton>
        <TaskButton $width={24} aria-label="Power"><svg width="17" height="17" viewBox="0 0 17 17" fill="none" stroke="#fff"><path d="M1 5h5v4H1ZM2.500 1v4M5 1v4M3.500 9v7" /><path d="M9 4h6v12H9ZM11 2h2" strokeWidth="2" /></svg></TaskButton>
        <TaskButton $width={24} aria-label="Network"><svg width="18" height="14" viewBox="0 0 18 14"><path d="M0 11h3v3H0ZM4 9h2v5H4ZM7 6h2v8H7ZM10 3h3v11h-3ZM14 0h3v14h-3Z" fill="#fff" /></svg></TaskButton>
        <TaskButton $width={24} aria-label="Volume"><svg width="15" height="16" viewBox="0 0 15 16" fill="none" stroke="#fff"><path d="M1 5h3l4-4v14l-4-4H1Z" fill="#fff" /><path d="M11 4q3 4 0 8" /></svg></TaskButton>
        <TaskButton $width={28} aria-label="Input mode"><svg width="13" height="16" viewBox="0 0 13 16" fill="none" stroke="#fff" strokeWidth="2"><path d="M1 16 6.500 1 12 16M3 11h7" /></svg></TaskButton>
        <Clock>10:29<br />2014/10/05</Clock>
      </Tray>
    </Taskbar>
  );
}

export default function App() {
  return (
    <Desktop>
      <GlobalStyle />
      <TitleBar>
        <Shield size={16} light />
        <Title>GBP/JPY 4時間 Bid</Title>
        <WindowButton aria-label="Minimize"><svg width="9" height="9" viewBox="0 0 9 9"><path d="M1 7h7" stroke="#b4bcc8" strokeWidth="2" /></svg></WindowButton>
        <WindowButton aria-label="Restore"><svg width="9" height="8" viewBox="0 0 9 8" fill="none" stroke="#b4bcc8"><path d="M.500 3h6v4.500h-6ZM2.500 2V.500h6V5H7" strokeWidth="1" /><path d="M0 3h7" strokeWidth="2" /></svg></WindowButton>
        <WindowButton aria-label="Close"><svg width="9" height="9" viewBox="0 0 9 9"><path d="m1 1 7 7M8 1 1 8" stroke="#c4ccd8" strokeWidth="2" /></svg></WindowButton>
      </TitleBar>

      <Pane>
        <PricePlot />
        <Scale top={26} height={423} rows={PRICES}>
          <rect x="2" y="230" width="47" height="16" rx="2" fill="#dc3c18" />
          <rect x="2" y="222" width="47" height="14" rx="2" fill="#3c6cd8" />
          <text x="2" y="231" fill="#fff">175.27[6]</text>
          <rect x="2" y="228" width="47" height="16" rx="2" fill="#fb9430" />
          <text x="2" y="238" fill="#fff4e4">175.22[2]</text>
        </Scale>
        {NOTES.map(({ top, width, title, text }) => (
          <Callout key={top} $top={top} $width={width} $small={!title}>
            {title && <CalloutTitle>{title}</CalloutTitle>}
            {text}
          </Callout>
        ))}
      </Pane>
      <Pane>
        <MacdPlot />
        <Scale top={452} height={107} rows={MACD_LEVELS} />
        <Callout $top={51} $width={107} $small>{'MACD (12,26,9)\nFast = −0.6534\nSignal = −0.6009\nHistogram = −0.0525'}</Callout>
      </Pane>
      <Pane>
        <RsqPlot />
        <Scale top={562} height={108} rows={RSQ_LEVELS} />
        <Callout $top={48} $width={157} $small>R−Squared (close,14) = 46.7929</Callout>
      </Pane>
      <DateAxis>
        <Plot viewBox="0 670 1315 16" height="16" preserveAspectRatio="xMaxYMid slice">
          {DAYS.map(([x, label]) => <text key={x} x={x} y="682" textAnchor="middle">{label}</text>)}
        </Plot>
      </DateAxis>

      <ControlRow>
        <ScrollArea>
          <ArrowButton aria-label="Scroll left"><svg width="6" height="10" viewBox="0 0 6 10"><path d="M6 0v10L0 5Z" fill="#ddd" /></svg></ArrowButton>
          <TimeSlider type="range" aria-label="Time position" defaultValue={100} />
          <ArrowButton aria-label="Scroll right"><svg width="6" height="10" viewBox="0 0 6 10"><path d="M0 0v10l6-5Z" fill="#ddd" /></svg></ArrowButton>
        </ScrollArea>
        <Toolbar />
      </ControlRow>
      <StatusBar>
        <StatusCell><span>2014/09/26 13:00:00</span><span>171.84[1]</span></StatusCell>
        <StatusCell>2014/10/05 10:29:55</StatusCell>
      </StatusBar>
      <TaskbarRow />
    </Desktop>
  );
}
